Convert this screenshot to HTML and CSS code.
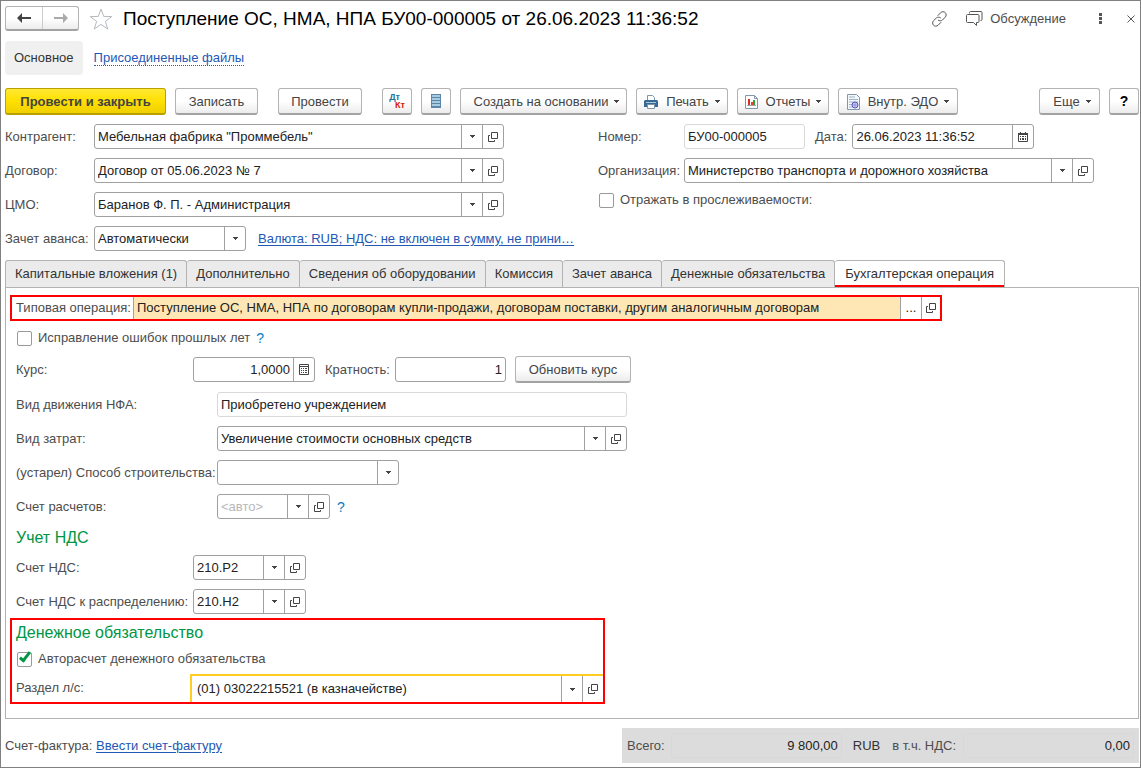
FILE: index.html
```html
<!DOCTYPE html>
<html lang="ru">
<head>
<meta charset="utf-8">
<title>Поступление ОС, НМА, НПА</title>
<link rel="stylesheet" href="styles.css">
</head>
<body>
<svg class="defs" aria-hidden="true">
  <symbol id="open" viewBox="0 0 10 10"><path d="M3.5.5h6v6h-6zM2 3.5H.5v6h6V8" fill="none" stroke="#444"/></symbol>
  <symbol id="arrow" viewBox="0 0 5 3"><path d="M0 0h5v1H4v1H3v1H2V2H1V1H0z" fill="#444"/></symbol>
  <symbol id="calendar" viewBox="0 0 10 10"><path d="M.5 2.5h9v7h-9z" fill="none" stroke="#444"/><path d="M0 1h10v2H0zM2 0h1v2H2zM7 0h1v2H7zM2 4h1v1H2zM4 4h2v1H4zM7 4h1v1H7zM2 6h1v2H2zM4 6h2v2H4zM7 6h1v2H7z" fill="#444"/></symbol>
  <symbol id="calc" viewBox="0 0 10 11"><path d="M.5.5h9v10h-9z" fill="none" stroke="#444"/><path d="M1 2h8v1H1zM2 4h1v1H2zM4 4h1v1H4zM6 4h2v1H6zM2 6h1v1H2zM4 6h1v1H4zM6 6h2v1H6zM2 8h1v1H2zM4 8h1v1H4zM6 8h2v1H6z" fill="#444"/></symbol>
</svg>
<div class="window">
  <header class="titlebar">
    <div class="nav">
      <button class="nav-btn" aria-label="Назад"><svg width="14" height="12" viewBox="0 0 14 12"><path d="M14 5v2H5v4L0 6l5-5v4z" fill="#444"/></svg></button>
      <button class="nav-btn" aria-label="Вперед"><svg width="14" height="12" viewBox="0 0 14 12"><path d="M0 5v2h9v4l5-5-5-5v4z" fill="#aaa"/></svg></button>
    </div>
    <button class="plain star" aria-label="В избранное"><svg width="24" height="22" viewBox="0 0 24 22"><path d="M12 1l2.7 7.4 8 .2-6.300 4.800 2.300 7.600-6.700-4.600L5.300 21l2.300-7.600L1.300 8.600l8-.2z" fill="#fff" stroke="#b4b9be"/></svg></button>
    <h1>Поступление ОС, НМА, НПА БУ00-000005 от 26.06.2023 11:36:52</h1>
    <button class="plain" aria-label="Ссылка"><svg width="17" height="16" viewBox="0 0 17 16" fill="none" stroke="#555" stroke-linecap="round"><path d="M7 4.500l2.500-2.700c1.600-1.600 3.700-1.200 4.800-.1s1.200 3.200-.1 4.500L11.500 9c-1.300 1.100-3 1.100-4.200.2M9.800 11.500l-2.500 2.600c-1.600 1.500-3.700 1.200-4.800.1s-1.200-3.200.1-4.500L5.300 7c1.300-1.100 3-1.100 4.200-.2"/></svg></button>
    <button class="plain discuss"><svg width="17" height="15" viewBox="0 0 17 15" fill="none" stroke="#555"><path d="M3.500 2.500v-1c0-.6.400-1 1-1H15c.6 0 1 .400 1 1v7c0 .6-.400 1-1 1h-.5M1.500 3.500H12c.6 0 1 .400 1 1v6c0 .6-.400 1-1 1h-1.500v3l-3-3h-6c-.6 0-1-.400-1-1v-6c0-.6.400-1 1-1z"/></svg>Обсуждение</button>
    <button class="plain dots" aria-label="Меню"><svg width="3" height="11" viewBox="0 0 3 11" fill="#555"><path d="M0 0h3v3H0zM0 4h3v3H0zM0 8h3v3H0z"/></svg></button>
    <button class="plain close" aria-label="Закрыть"><svg width="8" height="8" viewBox="0 0 8 8"><path d="M.5.500l7 7M7.500.500l-7 7" stroke="#555"/></svg></button>
  </header>

  <nav class="sections">
    <a class="section-current" href="#main">Основное</a>
    <a class="section-link" href="#files">Присоединенные файлы</a>
  </nav>

  <div class="toolbar">
    <button class="btn primary">Провести и закрыть</button>
    <button class="btn medium">Записать</button>
    <button class="btn medium apart">Провести</button>
    <button class="btn square apart" aria-label="Дебет и кредит"><span class="dtkt"><span class="dt">Дт</span><span class="kt">Кт</span></span></button>
    <button class="btn square" aria-label="Журнал"><svg width="10" height="14" viewBox="0 0 10 14"><path d="M0 0h10v14H0z" fill="#5d86a6"/><path d="M1 1h8v2H1zM1 4h8v2H1zM1 7h8v2H1zM1 10h8v2H1z" fill="#a9cbe2"/></svg></button>
    <button class="btn create">Создать на основании<svg class="caret"><use href="#arrow"/></svg></button>
    <button class="btn print">
      <svg width="14" height="14" viewBox="0 0 14 14"><path d="M3.500 6V.500h5l2 2V6z" fill="#fff" stroke="#7e96ab"/><path d="M0 6l1-1h12l1 1v6H0z" fill="#366a94"/><path d="M2 7h10v1H2z" fill="#a9c5da"/><path d="M3.500 9.500h7v4h-7z" fill="#fff" stroke="#7e96ab"/></svg>Печать<svg class="caret"><use href="#arrow"/></svg></button>
    <button class="btn print">
      <svg width="13" height="14" viewBox="0 0 13 14"><path d="M.5.500h9l3 3v10H.5z" fill="#fff" stroke="#8298a9"/><path d="M9.500.500v3h3" fill="none" stroke="#8298a9"/><path d="M3 4h2v6H3z" fill="#e02a23"/><path d="M6 7h2v3H6z" fill="#f03d22"/><path d="M8 5h2v5H8z" fill="#22a43c"/><path d="M2 10h9v1H2z" fill="#9aa"/></svg>Отчеты<svg class="caret"><use href="#arrow"/></svg></button>
    <button class="btn edo">
      <svg width="13" height="16" viewBox="0 0 13 16"><path d="M.5.500h9l3 3v12H.5z" fill="#f4f8fb" stroke="#8298a9"/><path d="M2 3h6M2 5.500h9M2 8h9M2 10.500h3M2 13h3" stroke="#9db5c8"/><circle cx="8" cy="11" r="3" fill="#c9c7f0" stroke="#5550b5"/><circle cx="8" cy="11" r="1" fill="#fff" stroke="#8681d0"/></svg>Внутр. ЭДО<svg class="caret"><use href="#arrow"/></svg></button>
    <button class="btn more">Еще<svg class="caret"><use href="#arrow"/></svg></button>
    <button class="btn square help" aria-label="Справка">?</button>
  </div>

  <div class="head-form">
    <div class="column">
      <div class="row"><label for="partner">Контрагент:</label>
        <div class="field wide"><input id="partner" value="Мебельная фабрика &quot;Проммебель&quot;"><button aria-label="Выбрать"><svg class="i-arrow"><use href="#arrow"/></svg></button><button aria-label="Открыть"><svg class="i-open"><use href="#open"/></svg></button></div></div>
      <div class="row"><label for="contract">Договор:</label>
        <div class="field wide"><input id="contract" value="Договор от 05.06.2023 № 7"><button aria-label="Выбрать"><svg class="i-arrow"><use href="#arrow"/></svg></button><button aria-label="Открыть"><svg class="i-open"><use href="#open"/></svg></button></div></div>
      <div class="row"><label for="person">ЦМО:</label>
        <div class="field wide"><input id="person" value="Баранов Ф. П. - Администрация"><button aria-label="Выбрать"><svg class="i-arrow"><use href="#arrow"/></svg></button><button aria-label="Открыть"><svg class="i-open"><use href="#open"/></svg></button></div></div>
      <div class="row"><label for="advance">Зачет аванса:</label>
        <div class="field select advance"><select id="advance"><option>Автоматически</option></select><span class="drop"><svg class="i-arrow"><use href="#arrow"/></svg></span></div>
        <a class="link currency" href="#currency">Валюта: RUB; НДС: не включен в сумму, не прини…</a></div>
    </div>
    <div class="column right">
      <div class="row"><label for="number">Номер:</label>
        <div class="field readonly number"><input id="number" value="БУ00-000005" readonly></div>
        <label class="inline" for="date">Дата:</label>
        <div class="field date"><input id="date" value="26.06.2023 11:36:52"><button aria-label="Календарь"><svg class="i-open"><use href="#calendar"/></svg></button></div></div>
      <div class="row"><label for="org">Организация:</label>
        <div class="field wide"><input id="org" value="Министерство транспорта и дорожного хозяйства"><button aria-label="Выбрать"><svg class="i-arrow"><use href="#arrow"/></svg></button><button aria-label="Открыть"><svg class="i-open"><use href="#open"/></svg></button></div></div>
      <label class="check"><input type="checkbox">Отражать в прослеживаемости:</label>
    </div>
  </div>

  <div class="tabs" role="tablist">
    <button role="tab">Капитальные вложения (1)</button>
    <button role="tab">Дополнительно</button>
    <button role="tab">Сведения об оборудовании</button>
    <button role="tab">Комиссия</button>
    <button role="tab">Зачет аванса</button>
    <button role="tab">Денежные обязательства</button>
    <button role="tab" class="active" aria-selected="true">Бухгалтерская операция</button>
  </div>

  <main class="panel">
    <div class="marked operation"><label for="operation">Типовая операция:</label>
      <div class="field"><input id="operation" value="Поступление ОС, НМА, НПА по договорам купли-продажи, договорам поставки, другим аналогичным договорам"><button aria-label="Выбрать">...</button><button aria-label="Открыть"><svg class="i-open"><use href="#open"/></svg></button></div></div>
    <div class="errors"><label class="check"><input type="checkbox">Исправление ошибок прошлых лет</label><button class="hint" aria-label="Подсказка">?</button></div>
    <div class="rows narrow">
      <div class="row"><label for="rate">Курс:</label>
        <div class="field rate"><input class="num" id="rate" value="1,0000"><button aria-label="Калькулятор"><svg class="i-calc"><use href="#calc"/></svg></button></div>
        <label class="inline" for="factor">Кратность:</label>
        <div class="field factor"><input class="num" id="factor" value="1"></div>
        <button class="btn update">Обновить курс</button></div>
    </div>
    <div class="rows">
      <div class="row"><label for="movement">Вид движения НФА:</label>
        <div class="field readonly wide"><input id="movement" value="Приобретено учреждением" readonly></div></div>
      <div class="row"><label for="cost">Вид затрат:</label>
        <div class="field wide"><input id="cost" value="Увеличение стоимости основных средств"><button aria-label="Выбрать"><svg class="i-arrow"><use href="#arrow"/></svg></button><button aria-label="Открыть"><svg class="i-open"><use href="#open"/></svg></button></div></div>
      <div class="row"><label for="building">(устарел) Способ строительства:</label>
        <div class="field select building"><select id="building"><option></option></select><span class="drop"><svg class="i-arrow"><use href="#arrow"/></svg></span></div></div>
      <div class="row"><label for="account">Счет расчетов:</label>
        <div class="field account"><input id="account" placeholder="&lt;авто&gt;"><button aria-label="Выбрать"><svg class="i-arrow"><use href="#arrow"/></svg></button><button aria-label="Открыть"><svg class="i-open"><use href="#open"/></svg></button></div>
        <button class="hint" aria-label="Подсказка">?</button></div>
    </div>
    <h2 class="vat-title">Учет НДС</h2>
    <div class="rows narrow">
      <div class="row"><label for="vat">Счет НДС:</label>
        <div class="field account"><input id="vat" value="210.Р2"><button aria-label="Выбрать"><svg class="i-arrow"><use href="#arrow"/></svg></button><button aria-label="Открыть"><svg class="i-open"><use href="#open"/></svg></button></div></div>
      <div class="row"><label for="vat-split">Счет НДС к распределению:</label>
        <div class="field account"><input id="vat-split" value="210.Н2"><button aria-label="Выбрать"><svg class="i-arrow"><use href="#arrow"/></svg></button><button aria-label="Открыть"><svg class="i-open"><use href="#open"/></svg></button></div></div>
    </div>
    <section class="marked duty">
      <h2>Денежное обязательство</h2>
      <label class="check"><input type="checkbox" checked>Авторасчет денежного обязательства</label>
      <div class="duty-row"><label for="ledger">Раздел л/с:</label>
        <div class="field focused"><input id="ledger" value="(01) 03022215521 (в казначействе)"><button aria-label="Выбрать"><svg class="i-arrow"><use href="#arrow"/></svg></button><button aria-label="Открыть"><svg class="i-open"><use href="#open"/></svg></button></div></div>
    </section>
  </main>

  <footer class="footer">
    <span class="invoice">Счет-фактура: <a class="link" href="#invoice">Ввести счет-фактуру</a></span>
    <div class="totals">
      <label for="total">Всего:</label><input id="total" value="9 800,00" readonly>
      <span class="unit">RUB</span>
      <label for="vat-total">в т.ч. НДС:</label><input id="vat-total" value="0,00" readonly>
    </div>
  </footer>
</div>
</body>
</html>
```
FILE: styles.css
```css
* { box-sizing: border-box; }
body {
  margin: 0;
  background: #fff;
  color: #4d4d4d;
  font: 13px/16px "Liberation Sans", Arial, sans-serif;
}
button, input, select { font: inherit; color: inherit; margin: 0; }
button { cursor: pointer; }
svg { flex: none; }
.defs { position: absolute; width: 0; height: 0; }
.window {
  min-height: 100vh;
  display: flex;
  flex-direction: column;
  border: 1px solid #808080;
  padding: 0 1px 1px 0;
}

.titlebar { display: flex; align-items: center; height: 35px; padding: 0 4px; }
.nav {
  display: flex;
  height: 25px;
  border: 1px solid #b3b3b3;
  border-bottom: 2px solid #a3a3a3;
  border-radius: 3px;
  background: linear-gradient(#fff 50%, #ececec);
}
.nav-btn { width: 36px; display: grid; place-items: center; padding: 0; border: 0; background: none; }
.nav-btn + .nav-btn { border-left: 1px solid #ccc; }
.plain { display: flex; align-items: center; padding: 0; border: 0; background: none; }
.star { margin: 0 10px; }
h1 { flex: 1; margin: 0; font-size: 19px; line-height: 24px; font-weight: 400; color: #000; white-space: nowrap; }
.discuss { gap: 7px; margin-left: 18px; }
.dots { margin-left: 33px; }
.close { margin-left: 25px; }

.sections { display: flex; align-items: center; gap: 11px; margin-top: 5px; padding-left: 4px; }
.section-current { padding: 9px; border-radius: 4px; background: #f0f0f0; color: #333; text-decoration: none; }
.section-link { color: #2458b5; text-decoration: none; border-bottom: 1px dotted #2458b5; line-height: 14px; }
.link { color: #2458b5; text-decoration: underline; text-underline-offset: 2px; }

.toolbar { display: flex; gap: 9px; margin-top: 13px; padding: 0 0 0 4px; }
.btn {
  display: flex;
  align-items: center;
  justify-content: center;
  height: 27px;
  padding: 1px 6px 0;
  gap: 8px;
  border: 1px solid #b3b3b3;
  border-bottom: 2px solid #a3a3a3;
  border-radius: 3px;
  background: linear-gradient(#fff 50%, #ececec);
  color: #444;
  white-space: nowrap;
}
.primary {
  min-width: 161px;
  border-color: #b8a000;
  background: linear-gradient(#ffe934, #ffe000 50%, #efd000);
  font-weight: 700;
}
.medium { min-width: 83px; }
.apart { margin-left: 11px; }
.medium.apart { min-width: 84px; }
.square { width: 30px; padding: 0; }
.create { min-width: 167px; padding-left: 12px; }
.print { min-width: 92px; }
.edo { min-width: 120px; }
.more { min-width: 61px; margin-left: auto; padding-left: 11px; }
.help { color: #000; font-weight: 700; font-size: 14px; }
.caret { width: 5px; height: 3px; margin-left: -2px; }
.dtkt { display: flex; font-size: 9px; font-weight: 700; line-height: 9px; }
.dt { color: #26719b; }
.kt { color: #d8190f; padding-top: 8px; margin-left: -5px; }

.head-form { display: flex; margin-top: 9px; padding-left: 4px; }
.column { width: 593px; display: flex; flex-direction: column; gap: 9px; }
.right { flex: 1; }
.row { display: flex; align-items: center; min-height: 25px; }
.column .row > label:first-child { width: 89px; white-space: nowrap; }
.right .row > label:first-child { width: 86px; }
.inline { margin: 0 5px 0 10px; white-space: nowrap; }
.field {
  display: flex;
  height: 25px;
  border: 1px solid #a0a0a0;
  border-radius: 3px;
  background: #fff;
  color: #222;
}
.field input, .field select {
  flex: 1;
  min-width: 0;
  width: 100%;
  padding: 0 3px;
  border: 0;
  outline: 0;
  background: none;
}
.field select { appearance: none; grid-area: 1 / 1; }
.field input::placeholder { color: #b8b8b8; opacity: 1; }
.field button, .drop {
  flex: none;
  width: 21px;
  display: grid;
  place-items: center;
  padding: 0;
  border: 0;
  border-left: 1px solid #a0a0a0;
  background: none;
}
.field .num { text-align: right; }
.select { display: grid; }
.drop { grid-area: 1 / 1; justify-self: end; pointer-events: none; }
.readonly { border-color: #d9d9d9; }
.i-arrow { width: 5px; height: 3px; }
.i-open { width: 10px; height: 10px; }
.i-calc { width: 10px; height: 11px; }
.wide { width: 410px; }
.number { width: 121px; }
.date { width: 182px; }
.advance { width: 152px; }
.building { width: 182px; }
.rate { width: 122px; }
.factor { width: 111px; }
.account { width: 113px; }
.currency { margin-left: 12px; white-space: nowrap; }
.check { display: flex; align-items: center; gap: 6px; }
.check input {
  appearance: none;
  width: 15px;
  height: 15px;
  border: 1px solid #999;
  border-radius: 2px;
  background: #fff;
}
.check input:checked { position: relative; }
.check input:checked::after {
  content: "";
  position: absolute;
  left: 4px;
  top: -3px;
  width: 6px;
  height: 12px;
  box-sizing: border-box;
  border: solid #009646;
  border-width: 0 3px 3px 0;
  transform: rotate(38deg);
}
.right .check { padding-left: 1px; }

.tabs { display: flex; margin-top: 9px; padding-left: 4px; }
.tabs button {
  height: 27px;
  padding: 0 9px;
  border: 1px solid #b3b3b3;
  border-width: 1px 1px 0 0;
  border-radius: 3px 3px 0 0;
  background: #ebebeb;
  color: #333;
  white-space: nowrap;
}
.tabs button:first-child { border-left-width: 1px; }
.tabs .active {
  height: 28px;
  padding: 0 10px;
  margin-bottom: -1px;
  background: #fff;
  border-bottom: 1px solid #fff;
  box-shadow: inset 0 -2px 0 #f00;
}
.panel { flex: 1; margin: 0 0 0 4px; padding: 7px 4px; border: 1px solid #b3b3b3; }
.marked { border: 2px solid #f00; }
.operation { display: flex; align-items: center; width: 932px; height: 26px; padding-left: 4px; }
.operation label { width: 117px; white-space: nowrap; }
.operation .field { flex: 1; height: 22px; border-width: 0 0 0 1px; border-radius: 0; }
.operation input { background: #ffe7b5; }
.operation button:last-child { width: 19px; }
.errors { display: flex; align-items: center; gap: 6px; padding: 8px 0 0 7px; height: 26px; }
.hint { padding: 0; border: 0; background: none; color: #0d7bc4; font-size: 14px; }
.rows { display: flex; flex-direction: column; gap: 9px; padding-left: 6px; margin-top: 9px; }
.rows .row > label:first-child { width: 201px; white-space: nowrap; }
.narrow .row > label:first-child { width: 177px; }
.update { min-width: 116px; margin-left: 9px; }
.row .hint { margin-left: 7px; }
h2 { margin: 0; color: #009646; font-size: 16px; line-height: 20px; font-weight: 400; }
.vat-title { padding: 9px 0 0 6px; }
.vat-title + .rows { margin-top: 7px; }
.duty { width: 595px; margin-top: 4px; padding: 3px 0 0 4px; }
.duty .check { padding: 8px 0 0 1px; }
.duty-row { display: flex; align-items: center; margin-top: 7px; }
.duty-row label { width: 174px; }
.focused { flex: 1; height: 28px; border: 0 solid #fc2; border-width: 2px 0 0 2px; border-radius: 0; }
.focused input { padding-left: 5px; }

.footer { display: flex; align-items: center; justify-content: space-between; margin: 9px 0 3px; padding-left: 4px; }
.totals { display: flex; align-items: center; width: 517px; height: 35px; padding: 0 5px; background: #dcdcdc; }
.totals label { width: 44px; white-space: nowrap; }
.totals input { flex: 1; min-width: 0; height: 25px; padding: 0 3px; border: 1px solid #d8d8d8; border-radius: 3px; background: none; text-align: right; color: #222; }
.unit { margin: 0 12px 0 11px; color: #333; }
.totals .unit + label { width: 71px; }
```
